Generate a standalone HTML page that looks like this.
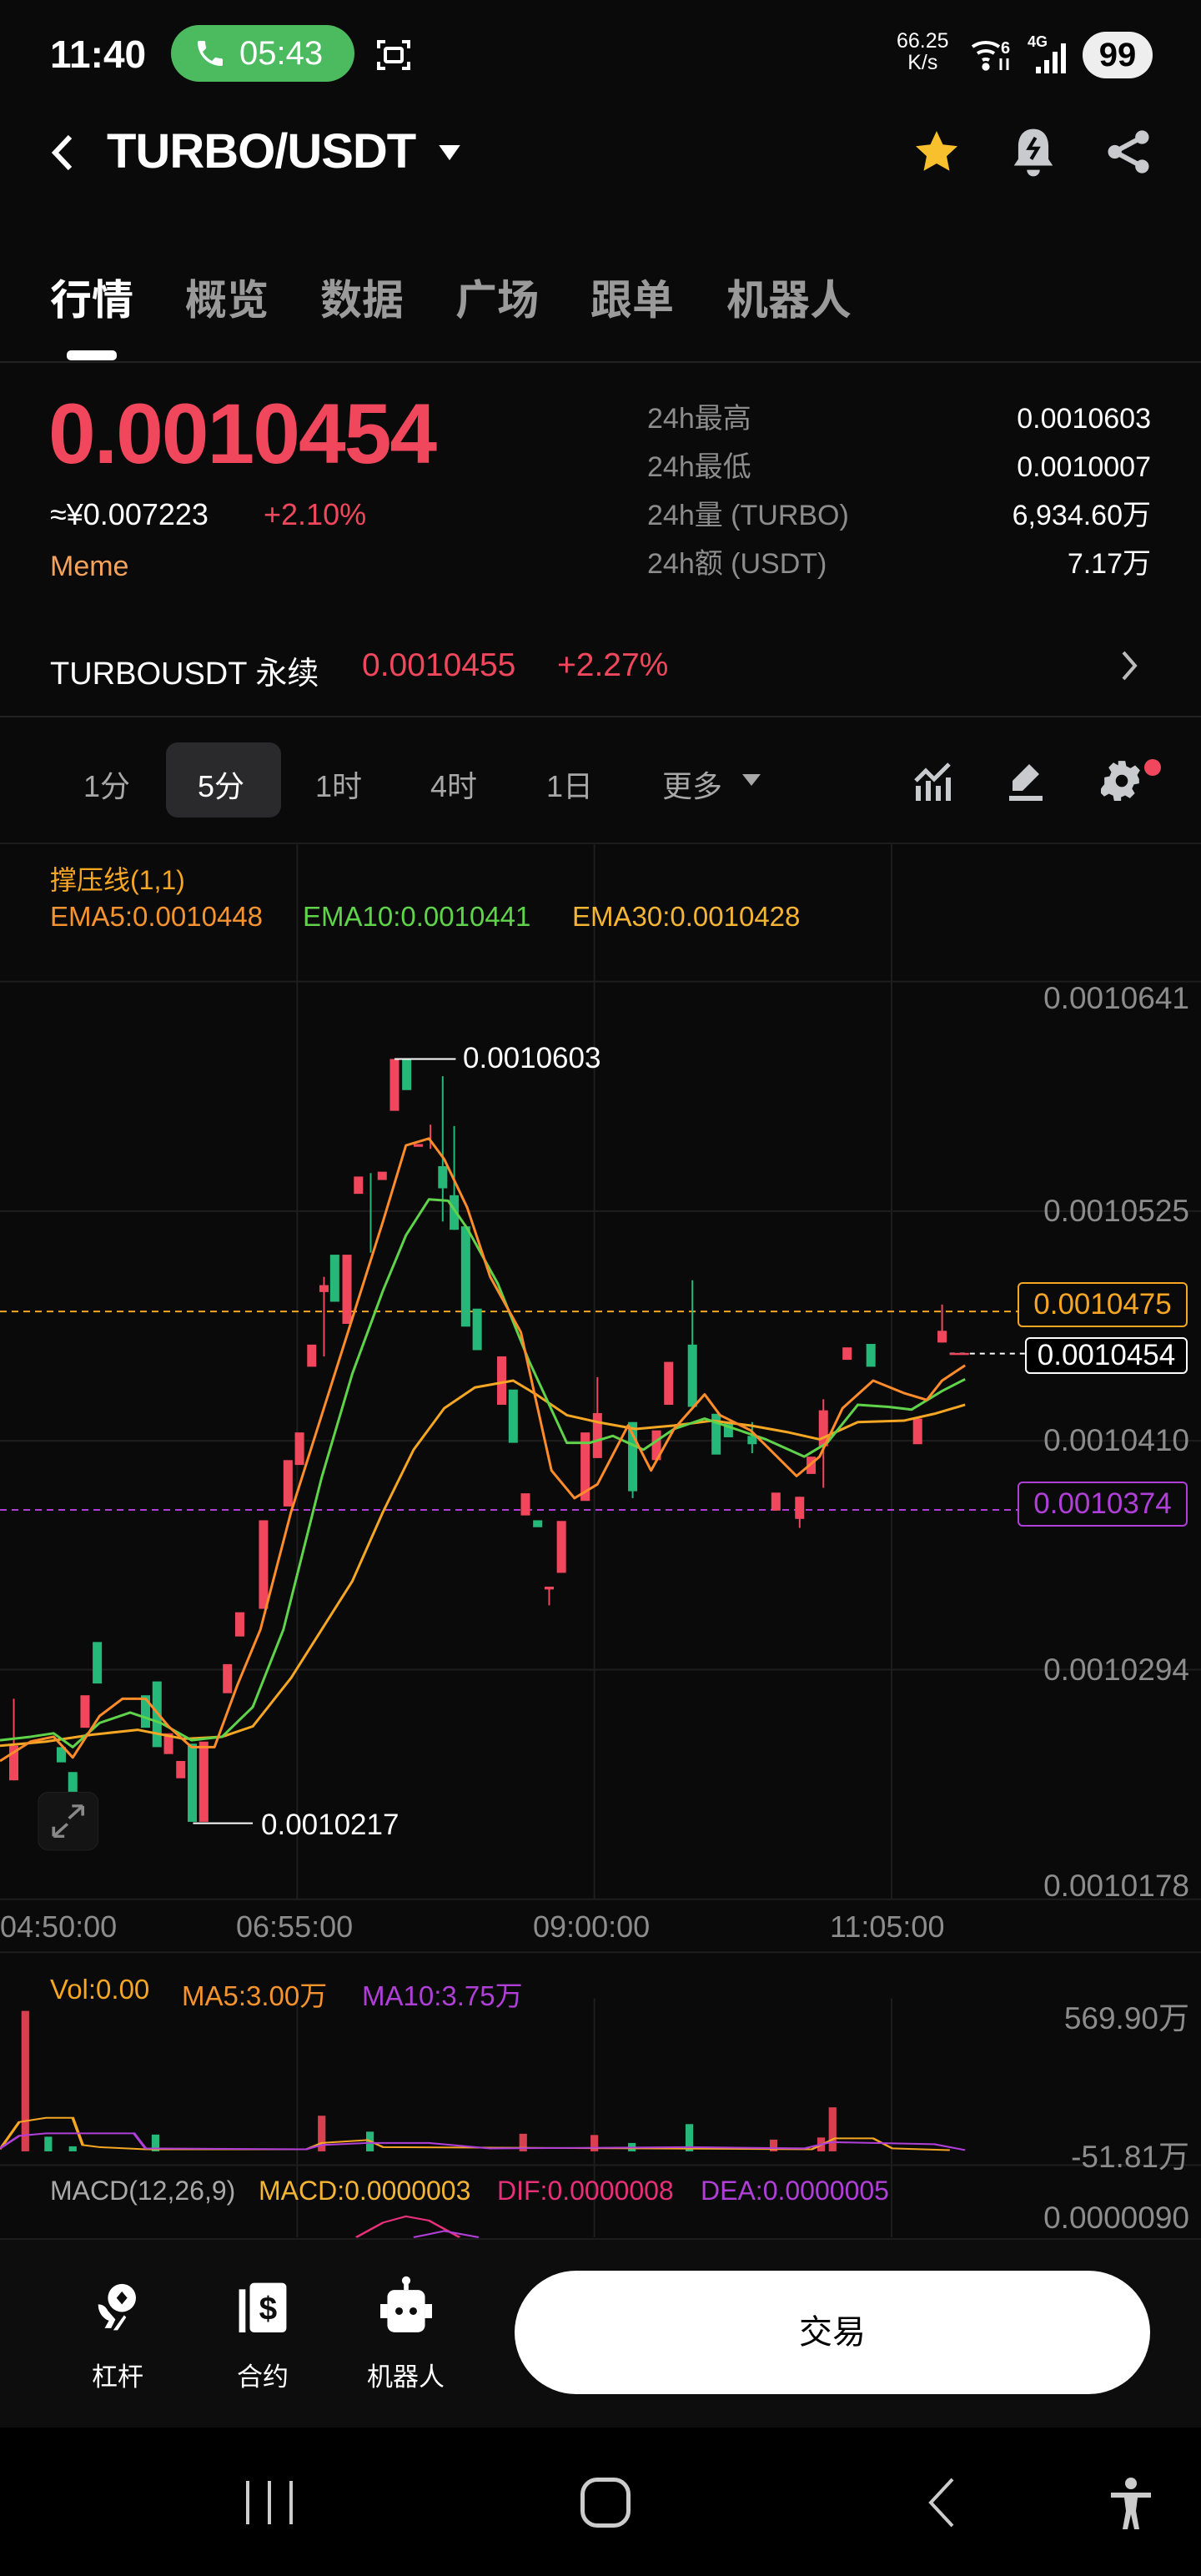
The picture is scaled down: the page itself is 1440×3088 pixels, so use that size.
<!DOCTYPE html>
<html><head><meta charset="utf-8">
<style>
*{margin:0;padding:0;box-sizing:border-box}
body{width:1440px;height:3088px;background:#0a0a0a;position:relative;overflow:hidden;font-family:"Liberation Sans","Noto Sans CJK SC",sans-serif;color:#fff}
.a{position:absolute;white-space:nowrap}
.g{color:#8c8c8c}
.r{color:#f0475c}
</style></head><body>
<!-- status bar -->
<div class="a" style="left:60px;top:38px;font-size:46px;font-weight:bold">11:40</div>
<div class="a" style="left:205px;top:30px;width:220px;height:68px;border-radius:34px;background:#4cba5f"></div>
<svg class="a" style="left:232px;top:44px" width="40" height="40" viewBox="0 0 24 24"><path d="M6.6 10.8c1.4 2.8 3.8 5.1 6.6 6.6l2.2-2.2c.3-.3.7-.4 1-.2 1.1.4 2.3.6 3.6.6.6 0 1 .4 1 1V20c0 .6-.4 1-1 1C10.6 21 3 13.4 3 4c0-.6.4-1 1-1h3.5c.6 0 1 .4 1 1 0 1.3.2 2.5.6 3.6.1.3 0 .7-.2 1z" fill="#fff"/></svg>
<div class="a" style="left:287px;top:42px;font-size:40px">05:43</div>
<svg class="a" style="left:448px;top:42px" width="48" height="48" viewBox="0 0 24 24" fill="none" stroke="#fff" stroke-width="2"><path d="M3 8V4h4M17 4h4v4M21 16v4h-4M7 20H3v-4"/><rect x="7" y="8" width="10" height="8" rx="1"/></svg>
<div class="a" style="left:1075px;top:36px;font-size:25px;line-height:26px;text-align:center">66.25<br>K/s</div>
<svg class="a" style="left:1162px;top:40px" width="60" height="50" viewBox="0 0 30 25" fill="none" stroke="#fff" stroke-width="2"><path d="M2 8a14 14 0 0 1 16 0M5 12a9 9 0 0 1 10 0M8 16a4 4 0 0 1 4 0"/><circle cx="10" cy="20" r="1.3" fill="#fff"/><text x="19" y="12" font-size="10" fill="#fff" stroke="none" font-weight="bold" font-family="Liberation Sans">6</text><path d="M19 15v7M23 22v-7" stroke-width="1.5"/></svg>
<div class="a" style="left:1232px;top:40px;font-size:18px;font-weight:bold">4G</div>
<svg class="a" style="left:1240px;top:50px" width="40" height="40" viewBox="0 0 20 20" fill="#fff"><rect x="1" y="15" width="3" height="4"/><rect x="6" y="11" width="3" height="8"/><rect x="11" y="6" width="3" height="13"/><rect x="16" y="1" width="3" height="18"/></svg>
<div class="a" style="left:1298px;top:38px;width:84px;height:56px;border-radius:28px;background:#eee;color:#000;font-size:40px;font-weight:bold;text-align:center;line-height:56px">99</div>

<!-- header -->
<svg class="a" style="left:60px;top:160px" width="30" height="46" viewBox="0 0 15 23"><path d="M12 2L3 11.5 12 21" fill="none" stroke="#fff" stroke-width="3"/></svg>
<div class="a" style="left:128px;top:148px;font-size:58px;font-weight:bold;letter-spacing:-1px">TURBO/USDT</div>
<svg class="a" style="left:526px;top:174px" width="26" height="20" viewBox="0 0 14 11"><path d="M0 0h14L7 10z" fill="#fff"/></svg>
<svg class="a" style="left:1092px;top:152px" width="62" height="60" viewBox="0 0 24 24"><path d="M12 2l3 6.5 7 .8-5.2 4.8 1.4 7L12 17.6 5.8 21.1l1.4-7L2 9.3l7-.8z" fill="#f7c02c"/></svg>
<svg class="a" style="left:1212px;top:152px" width="54" height="62" viewBox="0 0 20 24"><path d="M10 1c4.5 0 7 3.3 7 8v6l2 3H1l2-3V9c0-4.7 2.5-8 7-8z" fill="#c8cacd"/><path d="M7 20h6a3 3 0 0 1-6 0z" fill="#c8cacd"/><path d="M11 5l-3 5h4l-3 5" fill="none" stroke="#0a0a0a" stroke-width="1.6"/></svg>
<svg class="a" style="left:1325px;top:154px" width="56" height="56" viewBox="0 0 24 24" fill="#c8cacd"><circle cx="19" cy="4.5" r="3.5"/><circle cx="5" cy="12" r="3.5"/><circle cx="19" cy="19.5" r="3.5"/><path d="M19 4.5L5 12l14 7.5" fill="none" stroke="#c8cacd" stroke-width="2.5"/></svg>

<!-- tabs -->
<div class="a" style="left:60px;top:320px;font-size:50px;font-weight:bold">行情</div>
<div class="a" style="left:222px;top:320px;font-size:50px;font-weight:bold;color:#9a9a9a">概览</div>
<div class="a" style="left:384px;top:320px;font-size:50px;font-weight:bold;color:#9a9a9a">数据</div>
<div class="a" style="left:546px;top:320px;font-size:50px;font-weight:bold;color:#9a9a9a">广场</div>
<div class="a" style="left:708px;top:320px;font-size:50px;font-weight:bold;color:#9a9a9a">跟单</div>
<div class="a" style="left:871px;top:320px;font-size:50px;font-weight:bold;color:#9a9a9a">机器人</div>
<div class="a" style="left:80px;top:420px;width:60px;height:12px;border-radius:5px;background:#fff"></div>
<div class="a" style="left:0;top:433px;width:1440px;height:2px;background:#222"></div>

<!-- price -->
<div class="a r" style="left:58px;top:462px;font-size:102px;font-weight:bold;letter-spacing:-2px">0.0010454</div>
<div class="a" style="left:60px;top:596px;font-size:36px">≈¥0.007223</div>
<div class="a r" style="left:316px;top:596px;font-size:36px">+2.10%</div>
<div class="a" style="left:60px;top:660px;font-size:34px;color:#f5a25d">Meme</div>
<div class="a g" style="left:776px;top:473px;font-size:34px;line-height:58px">24h最高<br>24h最低<br>24h量 (TURBO)<br>24h额 (USDT)</div>
<div class="a" style="right:60px;top:473px;font-size:34px;line-height:58px;text-align:right">0.0010603<br>0.0010007<br>6,934.60万<br>7.17万</div>

<div class="a" style="left:60px;top:776px;font-size:38px">TURBOUSDT 永续</div>
<div class="a r" style="left:434px;top:776px;font-size:39px">0.0010455</div>
<div class="a r" style="left:668px;top:776px;font-size:39px">+2.27%</div>
<svg class="a" style="left:1343px;top:778px" width="22" height="40" viewBox="0 0 11 20"><path d="M2 2l7 8-7 8" fill="none" stroke="#bbb" stroke-width="2"/></svg>
<div class="a" style="left:0;top:858px;width:1440px;height:2px;background:#222"></div>

<!-- intervals -->
<div class="a" style="left:199px;top:890px;width:138px;height:90px;border-radius:14px;background:#2a2a2c"></div>
<div class="a" style="left:100px;top:914px;font-size:36px;color:#a8a8a8">1分</div>
<div class="a" style="left:237px;top:914px;font-size:36px">5分</div>
<div class="a" style="left:378px;top:914px;font-size:36px;color:#a8a8a8">1时</div>
<div class="a" style="left:516px;top:914px;font-size:36px;color:#a8a8a8">4时</div>
<div class="a" style="left:655px;top:914px;font-size:36px;color:#a8a8a8">1日</div>
<div class="a" style="left:794px;top:914px;font-size:36px;color:#a8a8a8">更多</div>
<svg class="a" style="left:890px;top:928px" width="22" height="16" viewBox="0 0 11 8"><path d="M0 0h11L5.5 7z" fill="#a8a8a8"/></svg>
<svg class="a" style="left:1094px;top:912px" width="48" height="50" viewBox="0 0 24 25" fill="#c8cacd"><rect x="2" y="15" width="3" height="9"/><rect x="8" y="12" width="3" height="12"/><rect x="14" y="15" width="3" height="9"/><rect x="20" y="10" width="3" height="14"/><path d="M2 12l6-6 5 5 9-9" fill="none" stroke="#c8cacd" stroke-width="2.5"/></svg>
<svg class="a" style="left:1206px;top:912px" width="48" height="50" viewBox="0 0 24 25" fill="#c8cacd"><path d="M14 2l6 6-10 10H4v-6z"/><rect x="2" y="21" width="20" height="3"/></svg>
<svg class="a" style="left:1320px;top:910px" width="50" height="50" viewBox="0 0 24 24"><path d="M10 1h4l.6 3 2.4 1.2 2.7-1.6 2.8 2.8-1.6 2.7L22 11.5V14l-3 .6-1.1 2.4 1.6 2.7-2.8 2.8-2.7-1.6-2.4 1V24h-4l-.6-3-2.4-1.1-2.7 1.6-2.8-2.8 1.6-2.7L2 14.5v-4l3-.6 1-2.4-1.6-2.7L7.2 2l2.7 1.6z" fill="#c8cacd"/><circle cx="12" cy="12.5" r="3.5" fill="#0a0a0a"/></svg>
<div class="a" style="left:1372px;top:910px;width:20px;height:20px;border-radius:10px;background:#f0475c"></div>
<div class="a" style="left:0;top:1010px;width:1440px;height:2px;background:#1c1c1c"></div>

<!-- main chart -->
<svg class="a" style="left:0;top:1000px" width="1440" height="1300" viewBox="0 0 1568 1568" preserveAspectRatio="none">
<g stroke="#1e1e1e" stroke-width="2">
<line x1="388" y1="15" x2="388" y2="1540" vector-effect="non-scaling-stroke"/><line x1="776" y1="15" x2="776" y2="1540" vector-effect="non-scaling-stroke"/><line x1="1164" y1="15" x2="1164" y2="1540" vector-effect="non-scaling-stroke"/>
<line x1="0" y1="213" x2="1568" y2="213" vector-effect="non-scaling-stroke"/><line x1="0" y1="545" x2="1568" y2="545" vector-effect="non-scaling-stroke"/><line x1="0" y1="877" x2="1568" y2="877" vector-effect="non-scaling-stroke"/><line x1="0" y1="1208" x2="1568" y2="1208" vector-effect="non-scaling-stroke"/><line x1="0" y1="1540" x2="1568" y2="1540" vector-effect="non-scaling-stroke"/>
</g>
<line x1="0" y1="690" x2="1330" y2="690" stroke="#f5a623" stroke-width="2" stroke-dasharray="8 6" vector-effect="non-scaling-stroke"/>
<line x1="0" y1="977" x2="1330" y2="977" stroke="#b03fd8" stroke-width="2" stroke-dasharray="8 6" vector-effect="non-scaling-stroke"/>
<line x1="1240" y1="751" x2="1338" y2="751" stroke="#fff" stroke-width="2" stroke-dasharray="6 6" vector-effect="non-scaling-stroke"/>
<g fill="#f0475c">
<rect x="12" y="1318" width="12" height="50"/><rect x="105" y="1245" width="12" height="47"/><rect x="214" y="1300" width="12" height="30"/><rect x="230" y="1340" width="12" height="25"/><rect x="260" y="1312" width="12" height="116"/><rect x="291" y="1200" width="12" height="42"/><rect x="307" y="1125" width="12" height="35"/><rect x="338" y="992" width="12" height="128"/><rect x="370" y="905" width="12" height="67"/><rect x="385" y="865" width="12" height="47"/><rect x="401" y="738" width="12" height="32"/><rect x="417" y="652" width="12" height="10"/><rect x="447" y="608" width="12" height="100"/><rect x="462" y="495" width="12" height="25"/><rect x="493" y="488" width="12" height="12"/><rect x="509" y="325" width="12" height="75"/><rect x="540" y="448" width="12" height="4"/><rect x="649" y="755" width="12" height="70"/><rect x="680" y="953" width="12" height="32"/><rect x="727" y="993" width="12" height="75"/><rect x="711" y="1088" width="12" height="4"/><rect x="758" y="865" width="12" height="99"/><rect x="774" y="837" width="12" height="65"/><rect x="851" y="862" width="12" height="43"/><rect x="867" y="763" width="12" height="62"/><rect x="1007" y="952" width="12" height="26"/><rect x="1038" y="958" width="12" height="32"/><rect x="1053" y="900" width="12" height="25"/><rect x="1069" y="833" width="12" height="52"/><rect x="1100" y="742" width="12" height="18"/><rect x="1192" y="845" width="12" height="37"/><rect x="1224" y="718" width="12" height="17"/><rect x="1240" y="750" width="25" height="3"/>
</g>
<g stroke="#f0475c" stroke-width="2"><line x1="18" y1="1250" x2="18" y2="1368" vector-effect="non-scaling-stroke"/><line x1="423" y1="640" x2="423" y2="755" vector-effect="non-scaling-stroke"/><line x1="717" y1="1088" x2="717" y2="1115" vector-effect="non-scaling-stroke"/><line x1="562" y1="420" x2="562" y2="455" vector-effect="non-scaling-stroke"/><line x1="1075" y1="817" x2="1075" y2="945" vector-effect="non-scaling-stroke"/><line x1="1230" y1="680" x2="1230" y2="735" vector-effect="non-scaling-stroke"/><line x1="1044" y1="958" x2="1044" y2="1003" vector-effect="non-scaling-stroke"/><line x1="780" y1="785" x2="780" y2="902" vector-effect="non-scaling-stroke"/></g>
<g fill="#26b879">
<rect x="74" y="1320" width="12" height="22"/><rect x="89" y="1356" width="12" height="32"/><rect x="121" y="1168" width="12" height="60"/><rect x="184" y="1245" width="12" height="47"/><rect x="199" y="1225" width="12" height="95"/><rect x="245" y="1315" width="12" height="113"/><rect x="431" y="608" width="12" height="68"/><rect x="525" y="325" width="12" height="45"/><rect x="572" y="480" width="12" height="32"/><rect x="587" y="522" width="12" height="50"/><rect x="602" y="567" width="12" height="145"/><rect x="617" y="686" width="12" height="60"/><rect x="664" y="803" width="12" height="77"/><rect x="696" y="992" width="12" height="10"/><rect x="820" y="850" width="12" height="100"/><rect x="898" y="738" width="12" height="90"/><rect x="929" y="838" width="12" height="59"/><rect x="945" y="852" width="12" height="20"/><rect x="976" y="870" width="12" height="12"/><rect x="1131" y="737" width="12" height="33"/>
</g>
<g stroke="#26b879" stroke-width="2"><line x1="578" y1="350" x2="578" y2="560" vector-effect="non-scaling-stroke"/><line x1="593" y1="422" x2="593" y2="572" vector-effect="non-scaling-stroke"/><line x1="904" y1="645" x2="904" y2="828" vector-effect="non-scaling-stroke"/><line x1="484" y1="490" x2="484" y2="605" vector-effect="non-scaling-stroke"/><line x1="826" y1="850" x2="826" y2="960" vector-effect="non-scaling-stroke"/><line x1="982" y1="850" x2="982" y2="895" vector-effect="non-scaling-stroke"/></g>
<g fill="none" stroke-width="3" stroke-linejoin="round">
<polyline vector-effect="non-scaling-stroke" stroke="#f5a623" points="0,1318 60,1312 120,1302 180,1295 240,1308 290,1305 330,1290 380,1220 420,1150 460,1080 500,980 540,890 580,830 620,800 670,790 700,810 740,840 780,850 830,860 880,855 930,848 980,855 1030,865 1070,875 1120,850 1180,848 1220,838 1260,825"/>
<polyline vector-effect="non-scaling-stroke" stroke="#5fd34a" points="0,1310 40,1305 70,1300 95,1320 130,1285 170,1270 210,1285 250,1310 290,1305 330,1262 370,1150 420,930 460,780 500,660 530,580 560,528 585,530 610,570 650,650 690,760 740,880 770,880 800,870 840,890 880,860 920,845 960,860 1000,875 1050,900 1080,880 1120,825 1160,828 1190,832 1230,805 1260,788"/>
<polyline vector-effect="non-scaling-stroke" stroke="#ff8c2a" points="0,1340 40,1312 70,1305 95,1335 130,1275 160,1250 190,1250 220,1290 250,1320 280,1320 310,1230 340,1150 380,980 420,840 460,700 500,560 530,450 560,440 580,470 610,540 640,640 680,720 720,920 750,960 780,940 820,855 850,920 880,860 920,810 940,840 980,862 1040,928 1070,900 1100,830 1140,790 1180,808 1210,818 1230,790 1260,768"/>
</g>
<g transform="translate(50,1385)"><rect width="78" height="84" rx="14" fill="#141414" stroke="#222"/><path d="M20 64l18-18M20 64v-14M20 64h14M58 20L40 38M58 20v14M58 20H44" stroke="#888" stroke-width="4" fill="none"/></g>
<line x1="515" y1="325" x2="595" y2="325" stroke="#fff" stroke-width="2" vector-effect="non-scaling-stroke"/>
<line x1="252" y1="1430" x2="330" y2="1430" stroke="#fff" stroke-width="2" vector-effect="non-scaling-stroke"/>
</svg>
<div class="a" style="left:60px;top:1030px;font-size:32px;color:#f5a623">撑压线(1,1)</div>
<div class="a" style="left:60px;top:1080px;font-size:33px;color:#f5932e">EMA5:0.0010448</div>
<div class="a" style="left:363px;top:1080px;font-size:33px;color:#5fd34a">EMA10:0.0010441</div>
<div class="a" style="left:686px;top:1080px;font-size:33px;color:#f5b534">EMA30:0.0010428</div>
<div class="a" style="left:555px;top:1249px;font-size:35px">0.0010603</div>
<div class="a" style="left:313px;top:2168px;font-size:35px">0.0010217</div>
<div class="a g" style="right:14px;top:1176px;font-size:37px">0.0010641</div>
<div class="a g" style="right:14px;top:1431px;font-size:37px">0.0010525</div>
<div class="a g" style="right:14px;top:1706px;font-size:37px">0.0010410</div>
<div class="a g" style="right:14px;top:1981px;font-size:37px">0.0010294</div>
<div class="a g" style="right:14px;top:2240px;font-size:37px">0.0010178</div>
<div class="a" style="left:1220px;top:1537px;width:204px;height:54px;border:2px solid #f5a623;border-radius:6px;color:#f5a623;font-size:35px;text-align:center;line-height:50px">0.0010475</div>
<div class="a" style="left:1229px;top:1603px;width:195px;height:44px;border:2px solid #fff;border-radius:6px;background:#000;font-size:35px;text-align:center;line-height:40px">0.0010454</div>
<div class="a" style="left:1220px;top:1776px;width:204px;height:54px;border:2px solid #b03fd8;border-radius:6px;color:#b03fd8;font-size:35px;text-align:center;line-height:50px">0.0010374</div>
<div class="a g" style="left:0;top:2289px;font-size:36px">04:50:00</div>
<div class="a g" style="left:283px;top:2289px;font-size:36px">06:55:00</div>
<div class="a g" style="left:639px;top:2289px;font-size:36px">09:00:00</div>
<div class="a g" style="left:995px;top:2289px;font-size:36px">11:05:00</div>

<!-- volume/macd -->
<svg class="a" style="left:0;top:2300px" width="1440" height="383" viewBox="0 0 1568 762" preserveAspectRatio="none">
<g stroke="#1e1e1e" stroke-width="2"><line x1="0" y1="80" x2="1568" y2="80" vector-effect="non-scaling-stroke"/><line x1="0" y1="588" x2="1568" y2="588" vector-effect="non-scaling-stroke"/><line x1="388" y1="190" x2="388" y2="760" vector-effect="non-scaling-stroke"/><line x1="776" y1="190" x2="776" y2="760" vector-effect="non-scaling-stroke"/><line x1="1164" y1="190" x2="1164" y2="760" vector-effect="non-scaling-stroke"/></g>
<g fill="#d8404f"><rect x="28" y="220" width="10" height="335"/><rect x="415" y="470" width="10" height="85"/><rect x="678" y="513" width="10" height="42"/><rect x="771" y="516" width="10" height="39"/><rect x="1005" y="527" width="10" height="28"/><rect x="1082" y="450" width="10" height="105"/><rect x="1067" y="522" width="10" height="33"/></g>
<g fill="#26b879"><rect x="58" y="520" width="10" height="35"/><rect x="90" y="543" width="10" height="12"/><rect x="198" y="515" width="10" height="40"/><rect x="478" y="508" width="10" height="47"/><rect x="895" y="490" width="10" height="65"/><rect x="820" y="535" width="10" height="20"/></g>
<polyline fill="none" stroke="#f5a623" stroke-width="4" points="0,550 25,485 60,475 95,475 108,540 130,545 190,550 400,550 420,535 480,528 500,545 1060,550 1090,524 1140,524 1165,548 1240,552"/>
<polyline fill="none" stroke="#b03fd8" stroke-width="4" points="0,548 25,518 60,512 175,512 190,548 400,550 420,540 480,535 560,535 640,548 900,545 1050,548 1085,533 1220,538 1260,552"/>
<polyline fill="none" stroke="#e8307a" stroke-width="4" points="465,760 500,725 530,710 560,720 600,760"/>
<polyline fill="none" stroke="#b03fd8" stroke-width="4" points="540,760 580,745 625,760"/>
</svg>
<div class="a" style="left:60px;top:2366px;font-size:33px;color:#f5a623">Vol:0.00</div>
<div class="a" style="left:218px;top:2366px;font-size:33px;color:#f5932e">MA5:3.00万</div>
<div class="a" style="left:434px;top:2366px;font-size:33px;color:#b03fd8">MA10:3.75万</div>
<div class="a g" style="right:14px;top:2389px;font-size:37px">569.90万</div>
<div class="a g" style="right:14px;top:2555px;font-size:37px">-51.81万</div>
<div class="a" style="left:60px;top:2608px;font-size:32px;color:#a8a8a8">MACD(12,26,9)</div>
<div class="a" style="left:310px;top:2608px;font-size:32px;color:#f5b534">MACD:0.0000003</div>
<div class="a" style="left:596px;top:2608px;font-size:32px;color:#e8307a">DIF:0.0000008</div>
<div class="a" style="left:840px;top:2608px;font-size:32px;color:#b03fd8">DEA:0.0000005</div>
<div class="a g" style="right:14px;top:2638px;font-size:37px">0.0000090</div>

<!-- bottom action bar -->
<div class="a" style="left:0;top:2683px;width:1440px;height:227px;background:#0d0d0d;border-top:2px solid #1c1c1c"></div>
<svg class="a" style="left:110px;top:2734px" width="62" height="62" viewBox="0 0 24 24" fill="#fff"><circle cx="14" cy="8" r="6.5"/><path d="M14 5l2.5 3-2.5 3-2.5-3z" fill="#0d0d0d"/><path d="M3 11c2 0 3.5 1 4.5 3L11 18l-2 4H6l2-3.5c-2-.5-5-3-5-7.5z"/><path d="M16 17l-4 6h-2l5-7z"/></svg>
<svg class="a" style="left:286px;top:2734px" width="58" height="62" viewBox="0 0 22 24" fill="#fff"><rect x="0" y="4" width="3" height="20"/><rect x="5" y="1" width="17" height="23" rx="2"/><text x="13.5" y="18" font-size="15" font-weight="bold" fill="#0d0d0d" text-anchor="middle" font-family="Liberation Sans">$</text></svg>
<svg class="a" style="left:456px;top:2728px" width="62" height="68" viewBox="0 0 22 24" fill="#fff"><circle cx="11" cy="2" r="1.8"/><rect x="10" y="2" width="2" height="4"/><rect x="3" y="6" width="16" height="18" rx="3"/><rect x="0" y="12" width="3" height="6"/><rect x="19" y="12" width="3" height="6"/><circle cx="8" cy="15" r="1.6" fill="#0d0d0d"/><circle cx="14" cy="15" r="1.6" fill="#0d0d0d"/></svg>
<div class="a" style="left:110px;top:2824px;font-size:31px">杠杆</div>
<div class="a" style="left:284px;top:2824px;font-size:31px">合约</div>
<div class="a" style="left:440px;top:2824px;font-size:31px">机器人</div>
<div class="a" style="left:617px;top:2722px;width:762px;height:148px;border-radius:74px;background:#fff;color:#000;font-size:40px;text-align:center;line-height:148px">交易</div>

<!-- nav bar -->
<div class="a" style="left:0;top:2910px;width:1440px;height:178px;background:#000"></div>
<svg class="a" style="left:292px;top:2970px" width="62" height="60" viewBox="0 0 62 60" stroke="#ccc" stroke-width="4"><line x1="5" y1="4" x2="5" y2="56"/><line x1="31" y1="4" x2="31" y2="56"/><line x1="57" y1="4" x2="57" y2="56"/></svg>
<div class="a" style="left:696px;top:2970px;width:60px;height:60px;border:5px solid #ccc;border-radius:20px"></div>
<svg class="a" style="left:1108px;top:2970px" width="40" height="60" viewBox="0 0 40 60"><path d="M34 2L8 30l26 28" fill="none" stroke="#ccc" stroke-width="4"/></svg>
<svg class="a" style="left:1330px;top:2970px" width="52" height="64" viewBox="0 0 26 32" fill="#ccc"><circle cx="13" cy="3.5" r="3.5"/><path d="M1 9h24v3h-8l-1 8 2 11h-3l-2-9-2 9H8l2-11-1-8H1z"/></svg>
</body></html>
